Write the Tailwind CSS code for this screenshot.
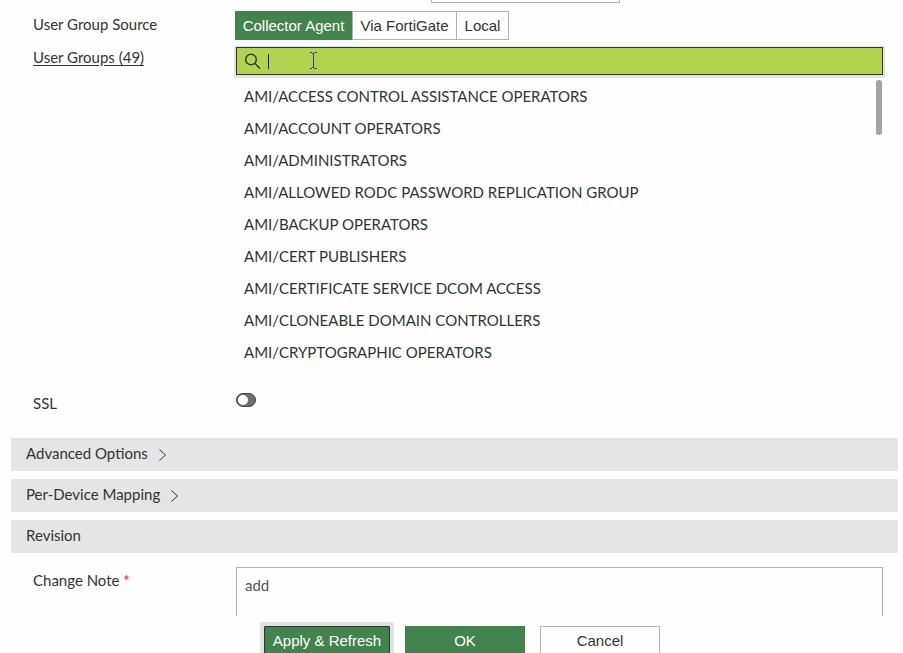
<!DOCTYPE html>
<html lang="en">
  <head>
    <meta charset="UTF-8" />
    <meta name="viewport" content="width=device-width, initial-scale=1.0" />
    <title>User Group Source</title>
    <script src="https://cdn.jsdelivr.net/npm/@tailwindcss/browser@4"></script>
  </head>
  <body
    class="flex flex-col h-screen overflow-hidden bg-[#fefefe] text-[#333] text-[15px] leading-5 font-['Lato',sans-serif]"
  >
    <main class="flex-1 min-h-0 overflow-hidden">
      <!-- end of the field above, scrolled out of view -->
      <div class="pl-[431px]">
        <input
          aria-label="Password"
          class="block w-[189px] h-[3px] border border-t-0 border-[#b3b3b3]"
        />
      </div>

      <section class="grid grid-cols-[203px_1fr] pl-[33px] pr-5 pt-2">
        <div id="source-label" class="pt-[3px]">User Group Source</div>
        <div
          class="flex -ml-px h-[29px] font-['Liberation_Sans',Arial,sans-serif]"
          role="group"
          aria-labelledby="source-label"
        >
          <button class="w-[117px] bg-[#43834d] text-white whitespace-nowrap">
            Collector Agent
          </button>
          <button class="w-[105px] border border-[#b3b3b3] whitespace-nowrap">
            Via FortiGate
          </button>
          <button class="w-[52px] border border-l-0 border-[#b3b3b3]">
            Local
          </button>
        </div>

        <div class="pt-[7px]">
          <a href="#groups" class="underline underline-offset-2">User Groups (49)</a>
        </div>
        <div class="pt-[7px]">
          <div
            class="relative flex items-center h-7 pl-2 border border-[#333] bg-[#b1d350] shadow-[0_1px_0_2px_#e2e2e2]"
          >
            <svg
              class="w-4 h-4"
              viewBox="0 0 16 16"
              fill="none"
              stroke="#333"
              stroke-width="1.4"
            >
              <circle cx="6" cy="6.5" r="5.3" />
              <path d="M10 10.5 15 15.5" />
            </svg>
            <span class="ml-[7px] w-px h-[15px] bg-[#222]"></span>
            <input
              aria-label="Search user groups"
              class="grow h-full outline-none"
            />
            <!-- mouse pointer -->
            <svg
              class="absolute left-[72px] top-1 w-2 h-[17px]"
              viewBox="0 0 8 17"
              fill="none"
              stroke="#4b3a9c"
            >
              <path d="M.5 .5H3M5 .5H7.5M3 1.5H5M4.5 1V16M3 15.5H5M.5 16.5H3M5 16.5H7.5" shape-rendering="crispEdges" />
            </svg>
          </div>
          <div class="flex justify-between items-start pt-[5px] pr-px">
            <ul id="groups" class="pl-2 leading-8">
              <li>AMI/ACCESS CONTROL ASSISTANCE OPERATORS</li>
              <li>AMI/ACCOUNT OPERATORS</li>
              <li>AMI/ADMINISTRATORS</li>
              <li>AMI/ALLOWED RODC PASSWORD REPLICATION GROUP</li>
              <li>AMI/BACKUP OPERATORS</li>
              <li>AMI/CERT PUBLISHERS</li>
              <li>AMI/CERTIFICATE SERVICE DCOM ACCESS</li>
              <li>AMI/CLONEABLE DOMAIN CONTROLLERS</li>
              <li>AMI/CRYPTOGRAPHIC OPERATORS</li>
            </ul>
            <div class="w-1.5 h-[55px] rounded-full bg-[#a3a3a3]"></div>
          </div>
        </div>

        <label for="ssl" class="pt-[25px]">SSL</label>
        <div class="pt-[25px]">
          <input
            id="ssl"
            type="checkbox"
            class="block appearance-none w-5 h-3.5 p-px rounded-full border border-[#444] bg-[#6e6e6e] before:block before:w-2.5 before:h-2.5 before:rounded-full before:bg-white"
          />
        </div>
      </section>

      <section class="flex flex-col gap-2 pl-[11px] pr-[5px] pt-[25px]">
        <button class="flex items-center gap-[11px] h-[33px] pl-[15px] pb-1 bg-[#e5e5e5]">
          Advanced Options
          <svg class="w-2 h-3 mt-1" viewBox="0 0 8 12" fill="none" stroke="#333">
            <path d="M.5 .5 6.5 6 .5 11.5" />
          </svg>
        </button>
        <button class="flex items-center gap-[11px] h-[33px] pl-[15px] pb-1 bg-[#e5e5e5]">
          Per-Device Mapping
          <svg class="w-2 h-3 mt-1" viewBox="0 0 8 12" fill="none" stroke="#333">
            <path d="M.5 .5 6.5 6 .5 11.5" />
          </svg>
        </button>
        <h2 class="flex items-center h-[33px] pl-[15px] pb-1 bg-[#e5e5e5]">
          Revision
        </h2>
      </section>

      <section class="grid grid-cols-[203px_1fr] pl-[33px] pr-5 pt-3.5">
        <label for="note" class="pt-[3px]">
          Change Note <span class="text-[#f00]">*</span>
        </label>
        <textarea
          id="note"
          class="block h-24 px-2 py-[7px] border border-[#b3b3b3] text-[#555] resize-none outline-none"
        >add</textarea>
      </section>
    </main>

    <footer
      class="flex justify-center gap-[15px] h-[37px] pt-2.5 pr-[15px] pl-9 font-['Liberation_Sans',Arial,sans-serif]"
    >
      <button
        class="w-[126px] h-[30px] border border-[#333] bg-[#43834d] text-white whitespace-nowrap rounded-[1px] shadow-[0_0_0_4px_#e2e2e2]"
      >
        Apply &amp; Refresh
      </button>
      <button class="w-[120px] h-[30px] bg-[#43834d] text-white">OK</button>
      <button class="w-[120px] h-[30px] border border-[#b3b3b3]">Cancel</button>
    </footer>
  </body>
</html>
